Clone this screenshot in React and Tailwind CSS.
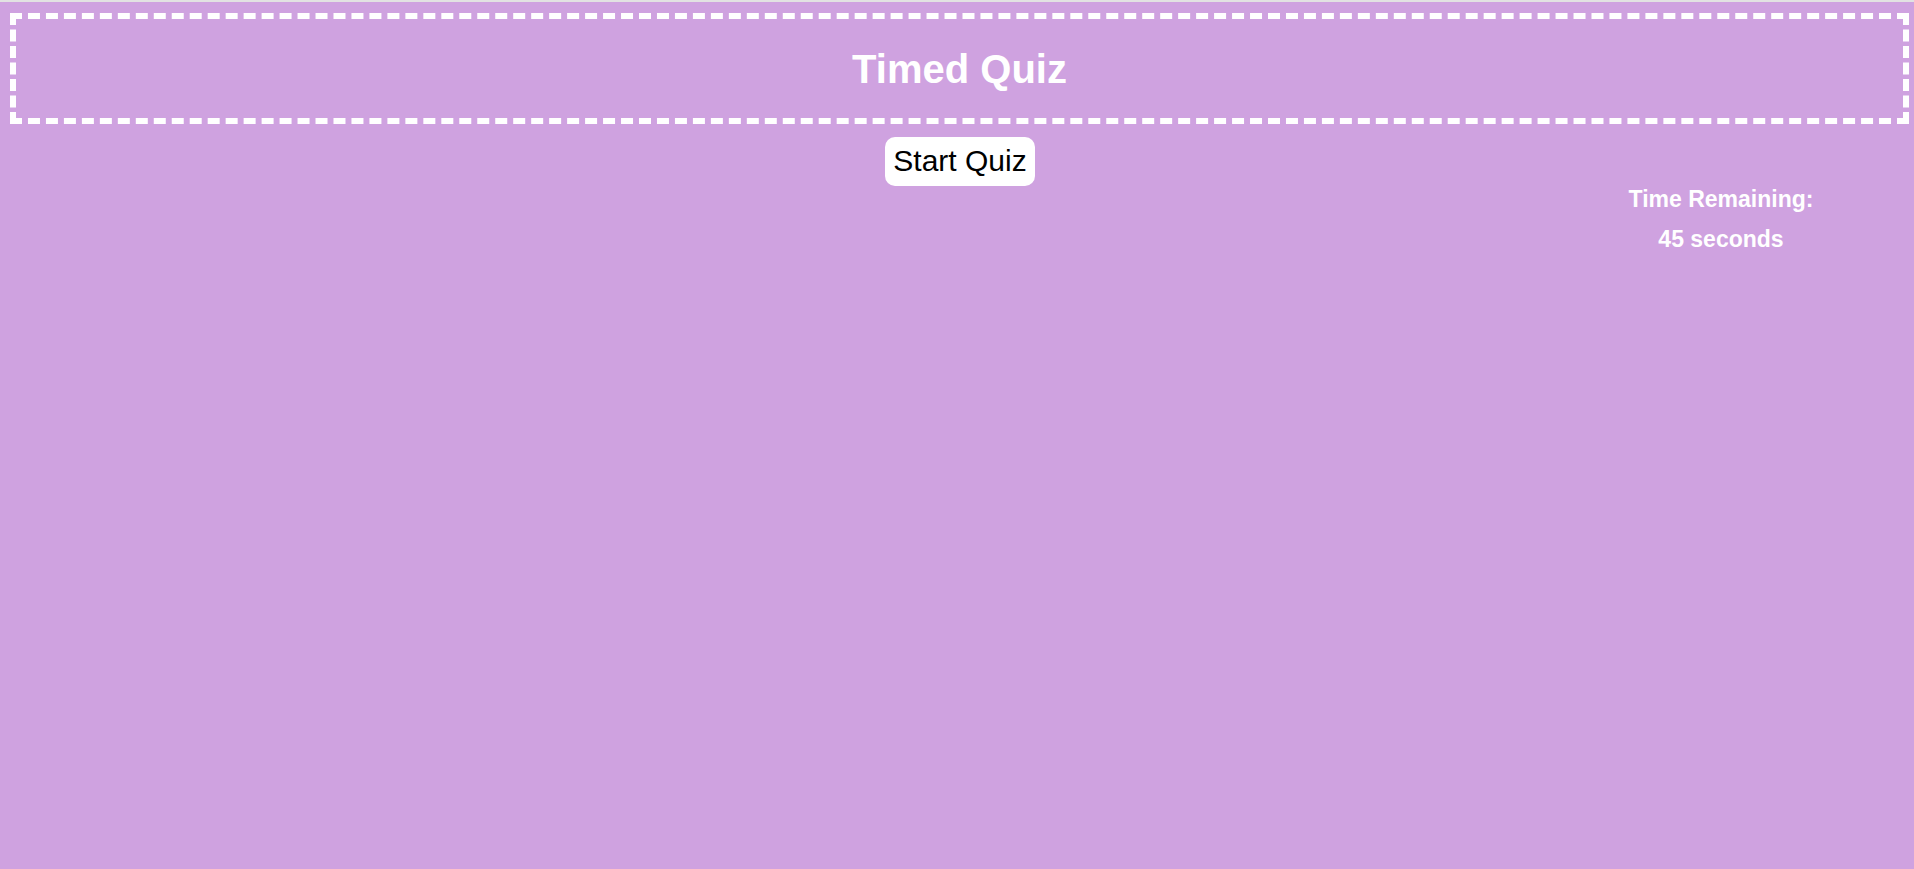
import React from "react";

const App = () => {
  return (
    <div className="min-h-[869px] bg-[#cfa2e0] font-['Liberation_Sans',Arial,sans-serif]">
      <div className="h-[2px] bg-[#e2e2e2]" />

      {/* Header */}
      <div className="mt-[11px] ml-[10px] mr-[5px] h-[111px] border-[6px] border-dashed border-white flex items-center justify-center">
        <h1 className="text-[40px] font-bold text-white leading-none">Timed Quiz</h1>
      </div>

      <div className="flex justify-center mt-[13px] pl-[6px]">
        <button className="bg-white text-black text-[30px] leading-[35px] px-[8px] pt-[6px] pb-[8px] rounded-[10px]">
          Start Quiz
        </button>
      </div>

      {/* Timer */}
      <div className="flex justify-end pr-[73px]">
        <div className="w-[240px] text-center text-white font-bold text-[23px] leading-[26px] flex flex-col gap-[14px]">
          <p>Time Remaining:</p>
          <p>45 seconds</p>
        </div>
      </div>
    </div>
  );
};

export default App;
